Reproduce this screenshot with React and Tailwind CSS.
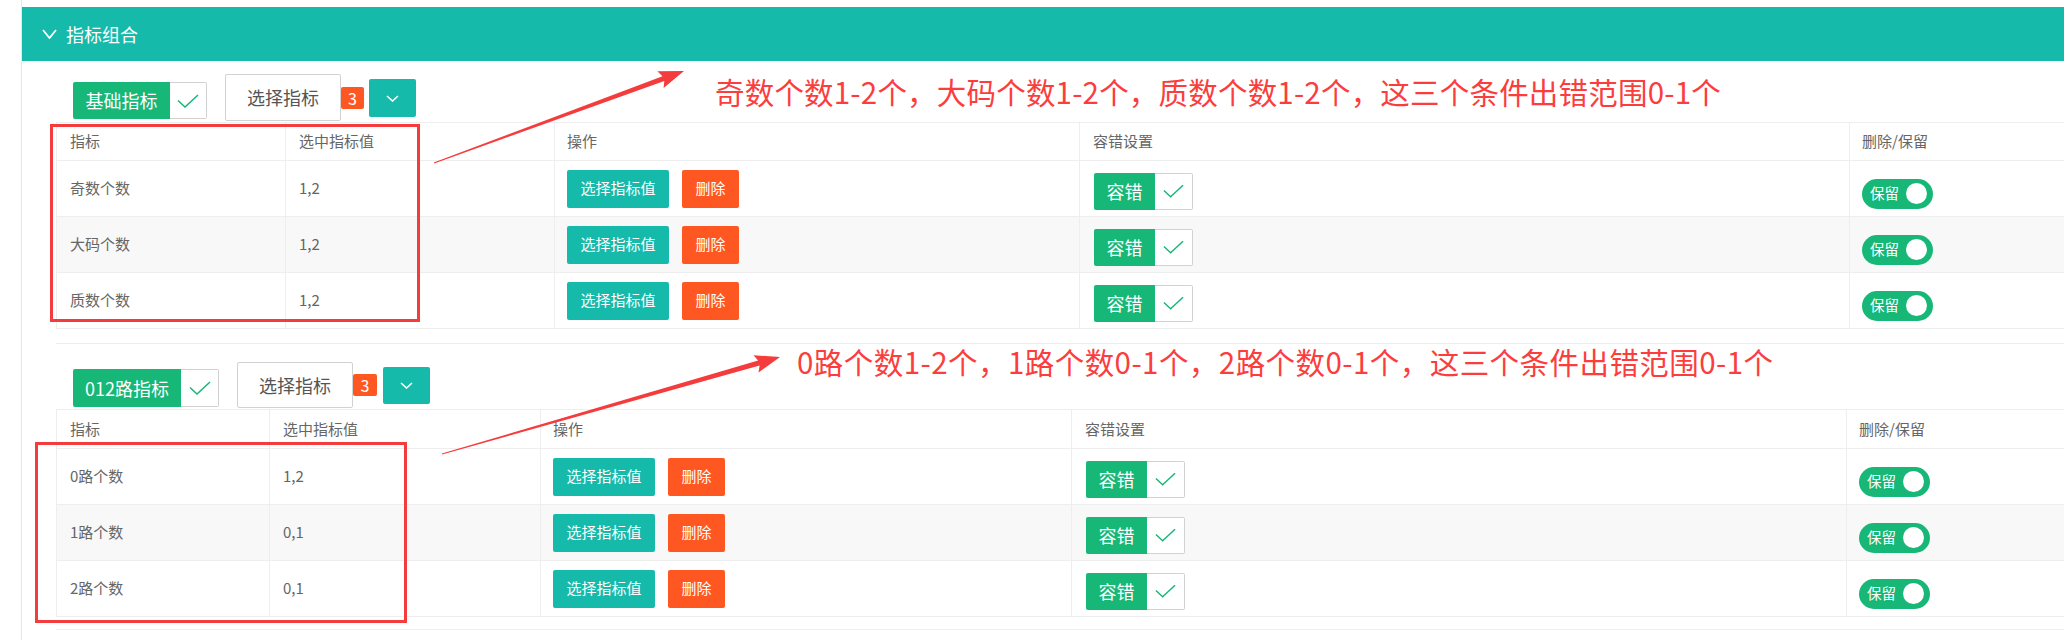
import React from "react";

const FONT = { fontFamily: '"Noto Sans CJK SC", "Noto Sans", sans-serif' };

function Check({ w = 22, h = 14 }) {
  return (
    <svg width={w} height={h} viewBox="0 0 22 14">
      <polyline points="1,6.5 8,13 21,1" fill="none" stroke="#16b777" strokeWidth="1.5" />
    </svg>
  );
}

function Chevron({ w = 13, h = 7, sw = 1.6 }) {
  return (
    <svg width={w} height={h} viewBox={`0 0 ${w} ${h}`}>
      <polyline points={`1,1 ${w / 2},${h - 1} ${w - 1},1`} fill="none" stroke="#fff" strokeWidth={sw} />
    </svg>
  );
}

function arrowPts(x1, y1, x2, y2) {
  const dx = x2 - x1, dy = y2 - y1, len = Math.hypot(dx, dy);
  const ux = dx / len, uy = dy / len, nx = -uy, ny = ux;
  const L = 22, hw = 9, sw = 2.6, tw = 0.5;
  const bx = x2 - ux * L, by = y2 - uy * L;
  const wx = x2 - ux * (L + 3), wy = y2 - uy * (L + 3);
  const p = [
    [x1 + nx * tw, y1 + ny * tw],
    [bx + nx * sw, by + ny * sw],
    [wx + nx * hw, wy + ny * hw],
    [x2, y2],
    [wx - nx * hw, wy - ny * hw],
    [bx - nx * sw, by - ny * sw],
    [x1 - nx * tw, y1 - ny * tw],
  ];
  return p.map((q) => q.map((v) => v.toFixed(1)).join(",")).join(" ");
}

function ToolbarRow({ label, v }) {
  const a = v === 1;
  return (
    <div className={a ? "flex items-start h-[48px] pl-[17px]" : "flex items-start h-[47px] pl-[17px]"}>
      <div className={a ? "flex mt-[8px] h-[37px]" : "flex mt-[7px] h-[38px]"}>
        <div className={a ? "w-[97px] h-full bg-[#16b777] text-white text-[18px] flex items-center justify-center rounded-l-[2px]" : "w-[108px] h-full bg-[#16b777] text-white text-[18px] flex items-center justify-center rounded-l-[2px]"}>
          {label}
        </div>
        <div className={a ? "w-[37px] h-full border border-l-0 border-[#d2d2d2] bg-white rounded-r-[2px] flex items-center justify-center" : "w-[38px] h-full border border-l-0 border-[#d2d2d2] bg-white rounded-r-[2px] flex items-center justify-center"}>
          <Check />
        </div>
      </div>
      <div className={a ? "ml-[18px] w-[116px] h-[47px] border border-[#d2d2d2] rounded-[2px] bg-white text-[#555] text-[18px] flex items-center justify-center" : "ml-[18px] w-[116px] h-[46px] border border-[#d2d2d2] rounded-[2px] bg-white text-[#555] text-[18px] flex items-center justify-center"}>
        选择指标
      </div>
      <div className={a ? "mt-[13px] w-[23px] h-[22px] bg-[#ff5722] rounded-[2px] text-white text-[16px] flex items-center justify-center" : "mt-[12px] w-[24px] h-[22px] bg-[#ff5722] rounded-[2px] text-white text-[16px] flex items-center justify-center"}>
        3
      </div>
      <div className={a ? "ml-[5px] mt-[5px] w-[47px] h-[38px] bg-[#16baaa] rounded-[2px] flex items-center justify-center" : "ml-[6px] mt-[5px] w-[47px] h-[37px] bg-[#16baaa] rounded-[2px] flex items-center justify-center"}>
        <Chevron />
      </div>
    </div>
  );
}

function DataTable({ rows, v }) {
  const a = v === 1;
  const c1 = a ? "w-[229px]" : "w-[213px]";
  const c2 = a ? "w-[269px]" : "w-[271px]";
  const c3 = a ? "w-[525px]" : "w-[531px]";
  const c4 = a ? "w-[770px]" : "w-[775px]";
  const cell = "h-full border-r border-[#eee] flex items-center shrink-0";
  return (
    <div className="border-t border-l border-[#eee] text-[15px] text-[#666]">
      <div className={a ? "flex h-[38px] border-b border-[#eee]" : "flex h-[39px] border-b border-[#eee]"}>
        <div className={`${c1} ${cell} pl-[13px]`}>指标</div>
        <div className={`${c2} ${cell} pl-[13px]`}>选中指标值</div>
        <div className={`${c3} ${cell} pl-[12px]`}>操作</div>
        <div className={`${c4} ${cell} pl-[13px]`}>容错设置</div>
        <div className="flex-1 h-full flex items-center pl-[12px]">删除/保留</div>
      </div>
      {rows.map((r, i) => (
        <div key={i} className={i === 1 ? "flex h-[56px] border-b border-[#eee] bg-[#f8f8f8]" : "flex h-[56px] border-b border-[#eee] bg-white"}>
          <div className={`${c1} ${cell} pl-[13px]`}>{r[0]}</div>
          <div className={`${c2} ${cell} pl-[13px]`}>{r[1]}</div>
          <div className={`${c3} ${cell} pl-[12px]`}>
            <div className="w-[102px] h-[38px] bg-[#16baaa] rounded-[2px] text-white flex items-center justify-center">选择指标值</div>
            <div className="ml-[13px] w-[57px] h-[38px] bg-[#ff5722] rounded-[2px] text-white flex items-center justify-center">删除</div>
          </div>
          <div className={`${c4} ${cell} pl-[14px]`}>
            <div className="flex h-[37px] mt-[5px]">
              <div className="w-[61px] h-full bg-[#16b777] rounded-l-[2px] text-white text-[18px] flex items-center justify-center">容错</div>
              <div className="w-[38px] h-full border border-l-0 border-[#d2d2d2] bg-white rounded-r-[2px] flex items-center justify-center">
                <Check w={21} h={14} />
              </div>
            </div>
          </div>
          <div className="flex-1 h-full flex items-center pl-[12px]">
            <div className="mt-[10px] w-[71px] h-[30px] rounded-full bg-[#16b777] flex items-center pl-[8px] pr-[6px]">
              <span className="text-white text-[14.5px] leading-none">保留</span>
              <span className="ml-auto w-[21px] h-[21px] rounded-full bg-white" />
            </div>
          </div>
        </div>
      ))}
    </div>
  );
}

export default function App() {
  const rows1 = [
    ["奇数个数", "1,2"],
    ["大码个数", "1,2"],
    ["质数个数", "1,2"],
  ];
  const rows2 = [
    ["0路个数", "1,2"],
    ["1路个数", "0,1"],
    ["2路个数", "0,1"],
  ];
  return (
    <div className="relative w-[2064px] h-[640px] overflow-hidden bg-white" style={FONT}>
      <div className="ml-[21px] pt-[7px] w-[2100px] h-[640px] border-l border-[#e6e6e6]">
        <div className="h-[54px] bg-[#16baaa] flex items-center pl-[20px]">
          <Chevron w={15} h={10} sw={1.8} />
          <span className="ml-[9px] text-white text-[18px]">指标组合</span>
        </div>
        <div className="pl-[34px]">
          <div className="mt-[13px]">
            <ToolbarRow label="基础指标" v={1} />
            <DataTable rows={rows1} v={1} />
          </div>
          <div className="mt-[14px] h-px bg-[#eee]" />
          <div className="mt-[18px]">
            <ToolbarRow label="012路指标" v={2} />
            <DataTable rows={rows2} v={2} />
          </div>
          <div className="mt-[12px] h-px bg-[#eee]" />
        </div>
      </div>

      {/* annotations */}
      <div className="absolute left-[50px] top-[124px] w-[370px] h-[198px] border-[3px] border-[#f53c3c]" />
      <div className="absolute left-[35px] top-[442px] w-[372px] h-[181px] border-[3px] border-[#f53c3c]" />
      <div className="absolute left-[715px] top-[77px] text-[29.5px] leading-[29px] tracking-[0.2px] text-[#fc3d3d] whitespace-nowrap">
        奇数个数1-2个，大码个数1-2个，质数个数1-2个，这三个条件出错范围0-1个
      </div>
      <div className="absolute left-[797px] top-[347px] text-[29.5px] leading-[29px] tracking-[0.45px] text-[#fc3d3d] whitespace-nowrap">
        0路个数1-2个，1路个数0-1个，2路个数0-1个，这三个条件出错范围0-1个
      </div>
      <svg className="absolute left-0 top-0 pointer-events-none" width="2064" height="640">
        <polygon points={arrowPts(434, 163, 684, 71)} fill="#f53c3c" />
        <polygon points={arrowPts(442, 454, 780, 357)} fill="#f53c3c" />
      </svg>
    </div>
  );
}
